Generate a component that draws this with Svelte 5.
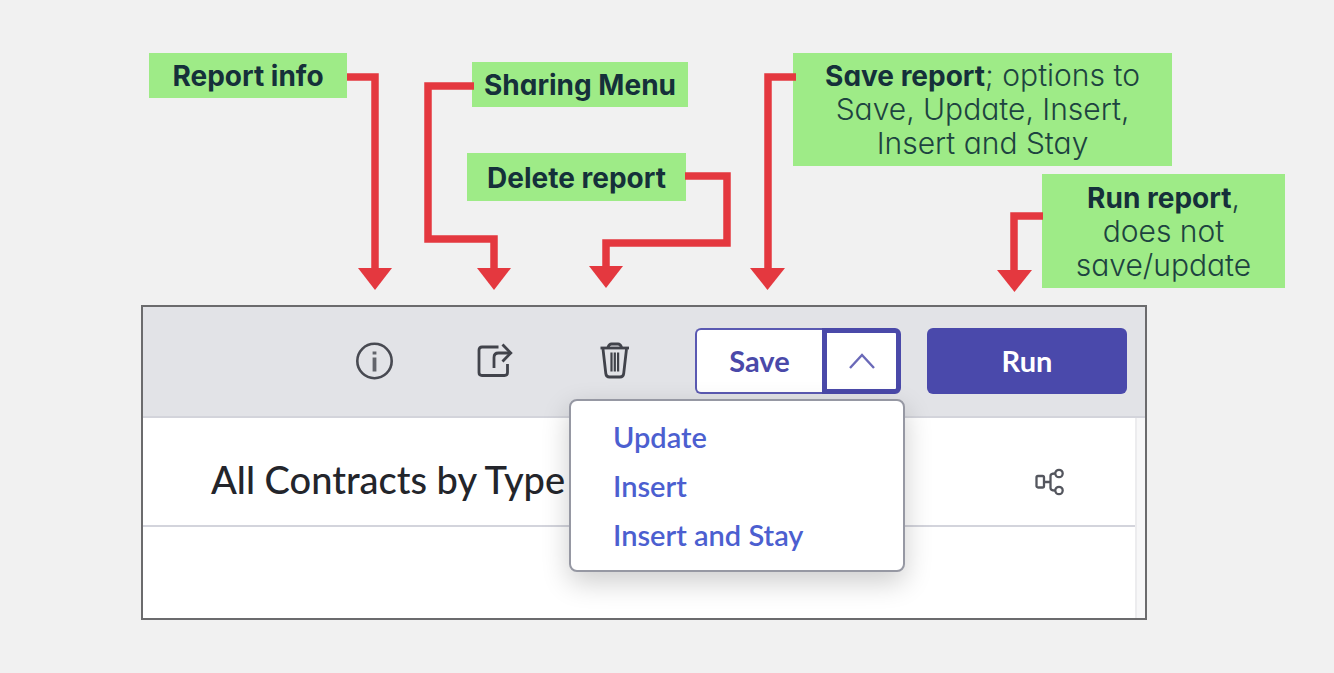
<script>
  const callouts = [
    { id: 'info', lines: [[{ b: 'Report info' }]] },
    { id: 'sharing', lines: [[{ b: 'Sharing Menu' }]] },
    { id: 'delete', lines: [[{ b: 'Delete report' }]] },
    {
      id: 'saving',
      lines: [
        [{ b: 'Save report' }, { t: '; options to' }],
        [{ t: 'Save, Update, Insert,' }],
        [{ t: 'Insert and Stay' }]
      ]
    },
    {
      id: 'running',
      lines: [[{ b: 'Run report' }, { t: ',' }], [{ t: 'does not' }], [{ t: 'save/update' }]]
    }
  ];

  const arrows = [
    { line: 'M347 77H375V270', head: 'M358 268H392L375 290Z' },
    { line: 'M474 86H428V239H494V270', head: 'M477 268H511L494 290Z' },
    { line: 'M685 176H727V243H606V268', head: 'M589 266H623L606 288Z' },
    { line: 'M796 77H768V270', head: 'M750 268H785L767.500 290Z' },
    { line: 'M1043 216H1014V272', head: 'M997 270H1032L1014.500 292Z' }
  ];

  const options = ['Update', 'Insert', 'Insert and Stay'];
  let open = $state(true);
</script>

<main>
  <section class="notes">
    {#each callouts as c (c.id)}
      <p class="callout {c.id}">
        {#each c.lines as line}
          <span class="line">{#each line as part}{#if part.b}<b>{part.b}</b>{:else}{part.t}{/if}{/each}</span>
        {/each}
      </p>
    {/each}
    <svg class="arrows" width="1334" height="305" viewBox="0 0 1334 305" aria-hidden="true">
      {#each arrows as a}
        <path d={a.line} fill="none" stroke="#e4383f" stroke-width="7.500" />
        <path d={a.head} fill="#e4383f" />
      {/each}
    </svg>
  </section>

  <section class="panel">
    <header class="toolbar">
      <div class="icons">
        <button class="icon" aria-label="Report info">
          <svg viewBox="0 0 38 38" fill="none" stroke="#484a52" stroke-width="2.600">
            <circle cx="18.500" cy="19" r="17.200" />
            <path d="M18.500 15.500V29.500" stroke-width="3.800" stroke="#62646b" />
            <path d="M18.500 9.500V12.500" stroke-width="3.800" stroke="#62646b" />
          </svg>
        </button>
        <button class="icon" aria-label="Sharing menu">
          <svg viewBox="0 0 38 38" fill="none" stroke="#41434b" stroke-width="2.800">
            <path d="M22.500 5H6Q3 5 3 8V30.500Q3 33.500 6 33.500H28.500Q31.500 33.500 31.500 30.500V22" />
            <path d="M18 26V15.500Q18 11 22.500 11H34" />
            <path d="M26.500 2.500L34.800 11L26.500 19.500" />
          </svg>
        </button>
        <button class="icon" aria-label="Delete report">
          <svg viewBox="0 0 38 38" fill="none" stroke="#41434b" stroke-width="2.800">
            <path d="M4.500 6H33" />
            <path d="M12 5.500Q13 2 15.500 2H22Q24.500 2 25.500 5.500" />
            <path d="M7 7L9.800 31.500Q10.200 35 13.500 35H24Q27.300 35 27.700 31.500L30.500 7" />
            <path d="M15.500 10.500V29.500M18.800 10.500V29.500M22.100 10.500V29.500" stroke-width="2.200" />
          </svg>
        </button>
      </div>

      <div class="split">
        <button class="save">Save</button>
        <button class="toggle" aria-label="Save options" aria-expanded={open} onclick={() => (open = !open)}>
          <svg viewBox="0 0 28 18" fill="none" stroke="#6a69b8" stroke-width="2.400">
            <path d="M2 16L14 3L26 16" />
          </svg>
        </button>
        {#if open}
          <ul class="menu">
            {#each options as o}
              <li><button>{o}</button></li>
            {/each}
          </ul>
        {/if}
      </div>

      <button class="runbtn">Run</button>
    </header>

    <div class="body">
      <div class="content">
        <div class="titlebar">
          <h1>All Contracts by Type</h1>
          <button class="tree" aria-label="Related lists">
            <svg viewBox="0 0 30 28" fill="none" stroke="#54565e" stroke-width="2.300">
              <rect x="1.500" y="8" width="7.500" height="11.500" rx="1.500" />
              <path d="M9 14H15M20 5.500Q15.500 5.500 15.500 8V20Q15.500 22.500 20 22.500" />
              <circle cx="24" cy="5.500" r="3.700" />
              <circle cx="24" cy="22.500" r="3.700" />
            </svg>
          </button>
        </div>
      </div>
      <div class="gutter"></div>
    </div>
  </section>
</main>

<style>
  :global(body) {
    margin: 0;
    background: #f1f1f1;
  }

  main {
    font-family: Lato, sans-serif;
    overflow-x: clip;
    padding-bottom: 53px;
  }

  button {
    font: inherit;
    border: 0;
    background: none;
    padding: 0;
    cursor: pointer;
  }

  svg {
    display: block;
  }

  .notes {
    position: relative;
    height: 305px;
  }

  .arrows {
    position: absolute;
    left: 0;
    top: 0;
  }

  .callout {
    position: absolute;
    box-sizing: border-box;
    margin: 0;
    padding: 5px 0 6px;
    background: #9eeb87;
    color: #1d4340;
    font-family: Inter, sans-serif;
    font-size: 30px;
    font-weight: 300;
    font-feature-settings: 'cv11';
    line-height: 34px;
    text-align: center;
    white-space: nowrap;
  }

  .callout b {
    font-size: 28px;
    font-weight: 700;
    color: #15303a;
  }

  .line {
    display: block;
    height: 34px;
  }

  .callout.info {
    left: 149px;
    top: 53px;
    width: 198px;
  }

  .callout.sharing {
    left: 472px;
    top: 62px;
    width: 216px;
  }

  .callout.delete {
    left: 467px;
    top: 153px;
    width: 219px;
    padding: 7px 0;
  }

  .callout.saving {
    left: 793px;
    top: 53px;
    width: 379px;
  }

  .callout.running {
    left: 1042px;
    top: 174px;
    width: 243px;
    padding: 6px 0;
  }

  .panel {
    margin: 0 187px 0 141px;
    border: 2px solid #6b6b6d;
    background: #fff;
  }

  .toolbar {
    display: flex;
    align-items: center;
    justify-content: flex-end;
    height: 111px;
    box-sizing: border-box;
    padding: 0 18px 2px 0;
    background: #e2e3e7;
    border-bottom: 2px solid #d3d4db;
  }

  .icons {
    display: flex;
    gap: 82px;
    margin-right: 61px;
  }

  .icon svg {
    width: 38px;
    height: 38px;
  }

  .split {
    position: relative;
    display: flex;
    height: 66px;
    margin-right: 26px;
  }

  .save {
    width: 127px;
    border: 2px solid #5a59b2;
    border-right: 0;
    border-radius: 6px 0 0 6px;
    background: #fff;
    color: #4a49a9;
    font-size: 29px;
    font-weight: 700;
  }

  .toggle {
    display: flex;
    align-items: center;
    justify-content: center;
    width: 79px;
    border: 5px solid #4a49a9;
    border-radius: 0 6px 6px 0;
    background: #fff;
  }

  .toggle svg {
    width: 28px;
    height: 18px;
  }

  .runbtn {
    width: 200px;
    height: 66px;
    border-radius: 6px;
    background: #4a49ab;
    color: #fff;
    font-size: 29px;
    font-weight: 700;
  }

  .menu {
    position: absolute;
    top: 71px;
    right: -4px;
    box-sizing: border-box;
    width: 336px;
    margin: 0;
    padding: 11px 0;
    list-style: none;
    background: #fff;
    border: 2px solid #9698a3;
    border-radius: 8px;
    box-shadow: 0 10px 28px rgba(0, 0, 0, 0.2);
  }

  .menu button {
    display: block;
    width: 100%;
    padding-left: 42px;
    color: #4c5fd0;
    font-size: 29px;
    font-weight: 600;
    line-height: 49px;
    text-align: left;
  }

  .body {
    display: flex;
    height: 200px;
  }

  .content {
    flex: 1;
  }

  .titlebar {
    display: flex;
    align-items: center;
    justify-content: space-between;
    box-sizing: border-box;
    height: 109px;
    padding: 14px 70px 0 68px;
    border-bottom: 2px solid #d3d4dc;
  }

  h1 {
    margin: 0;
    color: #23252b;
    font-size: 38px;
    font-weight: 500;
    line-height: 46px;
  }

  .tree {
    padding-top: 6px;
  }

  .tree svg {
    width: 30px;
    height: 28px;
  }

  .gutter {
    width: 8px;
    background: #f7f7f8;
    border-left: 2px solid #ececee;
  }
</style>
